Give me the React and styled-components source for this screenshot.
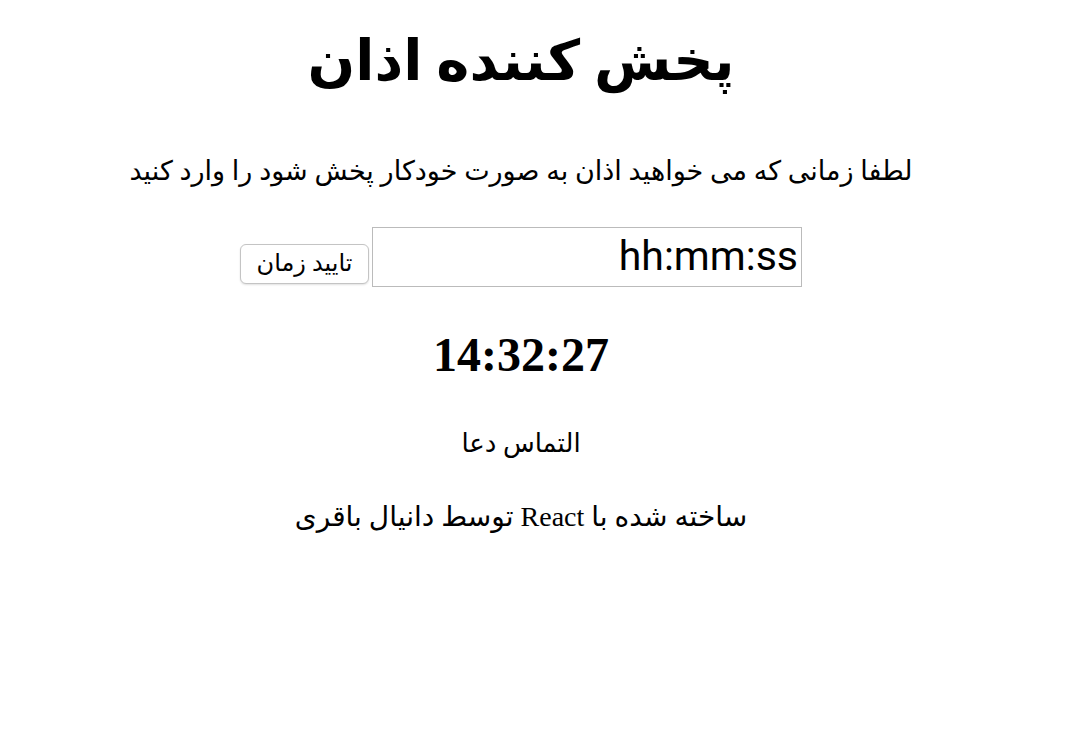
import React from "react";
import styled, { createGlobalStyle } from "styled-components";

const Global = createGlobalStyle`
  body {
    margin: 8px;
    background: #fff;
    font-family: "Liberation Serif", "DejaVu Sans", serif;
    color: #000;
  }
`;

const Page = styled.div`
  direction: rtl;
  text-align: center;
  display: flex;
  flex-direction: column;
  align-items: center;
  padding-right: 24px;
`;

const Title = styled.h1`
  font-size: 56px;
  font-weight: bold;
  margin: 20px 0 0;
  line-height: 1.2;
`;

const Lead = styled.p`
  font-size: 27px;
  margin: 60px 0 0;
`;

const Form = styled.div`
  display: flex;
  align-items: flex-end;
  justify-content: center;
  gap: 3px;
  margin-top: 40px;
`;

const TimeInput = styled.input`
  width: 430px;
  height: 60px;
  box-sizing: border-box;
  font-size: 41px;
  font-family: Roboto, "Liberation Sans", sans-serif;
  border: 1px solid #bbb;
  padding: 0 3px 2px;
  direction: rtl;
  &::placeholder {
    color: #000;
  }
`;

const Button = styled.button`
  height: 40px;
  width: 129px;
  box-sizing: border-box;
  font-size: 24px;
  font-family: "Liberation Serif", "DejaVu Sans", serif;
  background: #fff;
  border: 1px solid #c4c4c4;
  border-radius: 6px;
  box-shadow: 0 1px 2px rgba(0, 0, 0, 0.12);
  margin-bottom: 3px;
  padding: 0 0 2px;
`;

const Clock = styled.h2`
  font-size: 48px;
  font-weight: bold;
  margin: 40px 0 0;
`;

const Note = styled.p`
  font-size: ${(p) => p.$size}px;
  margin: ${(p) => p.$top}px 0 0;
`;

export default function App() {
  return (
    <>
      <Global />
      <Page>
        <Title>پخش کننده اذان</Title>
        <Lead>لطفا زمانی که می خواهید اذان به صورت خودکار پخش شود را وارد کنید</Lead>
        <Form>
          <TimeInput placeholder="hh:mm:ss" />
          <Button>تایید زمان</Button>
        </Form>
        <Clock>14:32:27</Clock>
        <Note $size={26} $top={46}>التماس دعا</Note>
        <Note $size={28} $top={41}>ساخته شده با React توسط دانیال باقری</Note>
      </Page>
    </>
  );
}
